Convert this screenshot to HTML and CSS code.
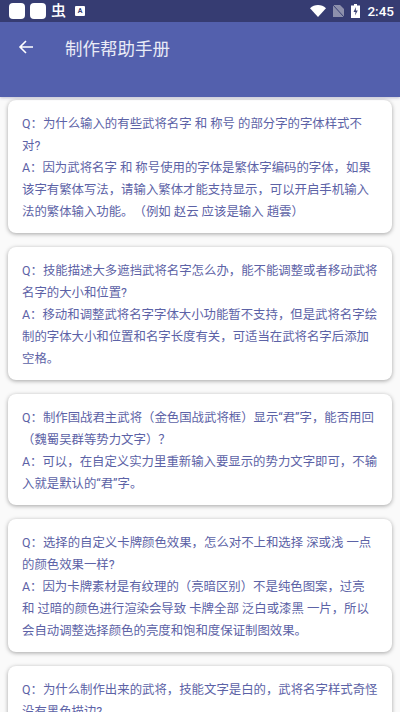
FILE: index.html
```html
<!DOCTYPE html>
<html lang="zh">
<head>
<meta charset="utf-8">
<title>制作帮助手册</title>
<link rel="stylesheet" href="styles.css">
</head>
<body>
<div class="screen">
  <header class="header">
    <div class="status">
      <div class="status-left">
        <span class="square"></span>
        <span class="square"></span>
        <span class="bug">虫</span>
        <span class="badge">A</span>
      </div>
      <div class="status-right">
        <svg class="wifi" viewBox="0 0 16 12"><path d="M0 3.2C4.4-1 11.600-1 16 3.200L8 12z" fill="#fff"/></svg>
        <svg class="sim" viewBox="0 0 11 12"><path d="M0 0h7l4 4v8H0z" fill="#8d90ac"/><path d="M0 0l11 12" stroke="#3a4175" stroke-width="1"/></svg>
        <svg class="battery" viewBox="0 0 9 14"><path d="M3 0h3v1.500h3V14H0V1.500h3z" fill="#fff"/><path d="M5 3L2.500 8h2L4 11.500 6.800 6.500h-2z" fill="#3a4175"/></svg>
        <span class="time">2:45</span>
      </div>
    </div>
    <div class="toolbar">
      <svg class="back" viewBox="0 0 16 16"><path d="M15 8H2M8 2L2 8l6 6" fill="none" stroke="#fff" stroke-width="1.600"/></svg>
      <h1 class="title">制作帮助手册</h1>
    </div>
  </header>
  <main class="list">
    <section class="card">
      <p>Q：为什么输入的有些武将名字 和 称号 的部分字的字体样式不对?</p>
      <p>A：因为武将名字 和 称号使用的字体是繁体字编码的字体，如果该字有繁体写法，请输入繁体才能支持显示，可以开启手机输入法的繁体输入功能。（例如 赵云 应该是输入 趙雲）</p>
    </section>
    <section class="card">
      <p>Q：技能描述大多遮挡武将名字怎么办，能不能调整或者移动武将名字的大小和位置?</p>
      <p>A：移动和调整武将名字字体大小功能暂不支持，但是武将名字绘制的字体大小和位置和名字长度有关，可适当在武将名字后添加空格。</p>
    </section>
    <section class="card">
      <p>Q：制作国战君主武将（金色国战武将框）显示“君”字，能否用回（魏蜀吴群等势力文字）？</p>
      <p>A：可以，在自定义实力里重新输入要显示的势力文字即可，不输入就是默认的“君”字。</p>
    </section>
    <section class="card">
      <p>Q：选择的自定义卡牌颜色效果，怎么对不上和选择 深或浅 一点的颜色效果一样?</p>
      <p>A：因为卡牌素材是有纹理的（亮暗区别）不是纯色图案，过亮和&nbsp;过暗的颜色进行渲染会导致 卡牌全部 泛白或漆黑 一片，所以会自动调整选择颜色的亮度和饱和度保证制图效果。</p>
    </section>
    <section class="card">
      <p>Q：为什么制作出来的武将，技能文字是白的，武将名字样式奇怪没有黑色描边?</p>
    </section>
  </main>
</div>
</body>
</html>
```
FILE: styles.css
```css
* { box-sizing: border-box; }
html, body { margin: 0; padding: 0; }
body { background: #fafafa; font-family: "Roboto", "Noto Sans CJK SC", sans-serif; }
.screen { width: 400px; height: 712px; overflow: hidden; display: flex; flex-direction: column; }
.header { background: #5360ad; height: 97px; flex: none; box-shadow: 0 1px 3px rgba(60,60,120,.3); position: relative; }
.status { height: 22px; background: #363c72; display: flex; justify-content: space-between; align-items: center; padding: 0 6px 0 9px; }
.status-left, .status-right { display: flex; align-items: center; }
.square { width: 16px; height: 16px; border-radius: 4px; background: #fff; margin-right: 5px; }
.bug { color: #fff; font-size: 15px; font-weight: 500; line-height: 16px; width: 15px; margin-right: 9px; }
.badge { width: 10px; height: 10px; background: #fff; color: #363c72; font-size: 7px; font-weight: 700; line-height: 10px; text-align: center; border-radius: 1px; }
.wifi { width: 16px; height: 12px; margin-right: 7px; }
.sim { width: 11px; height: 12px; margin-right: 7px; }
.battery { width: 9px; height: 14px; margin-right: 7px; }
.time { color: #fff; font-size: 13.500px; font-weight: 500; }
.toolbar { display: flex; align-items: center; height: 50px; padding-left: 18px; }
.back { width: 16px; height: 16px; margin-right: 31px; }
.title { margin: 0; color: #e9ebf6; font-size: 17.500px; font-weight: 400; }
.list { padding: 3px 8px 0; display: flex; flex-direction: column; gap: 14px; }
.card { background: #fff; border-radius: 8px; box-shadow: 0 1px 4px rgba(0,0,0,.35); padding: 13px 12.500px 10px 14px; flex: none; }
.card p { margin: 0; color: #5c62a6; font-size: 12.400px; line-height: 22px; text-spacing-trim: space-all; }
```
